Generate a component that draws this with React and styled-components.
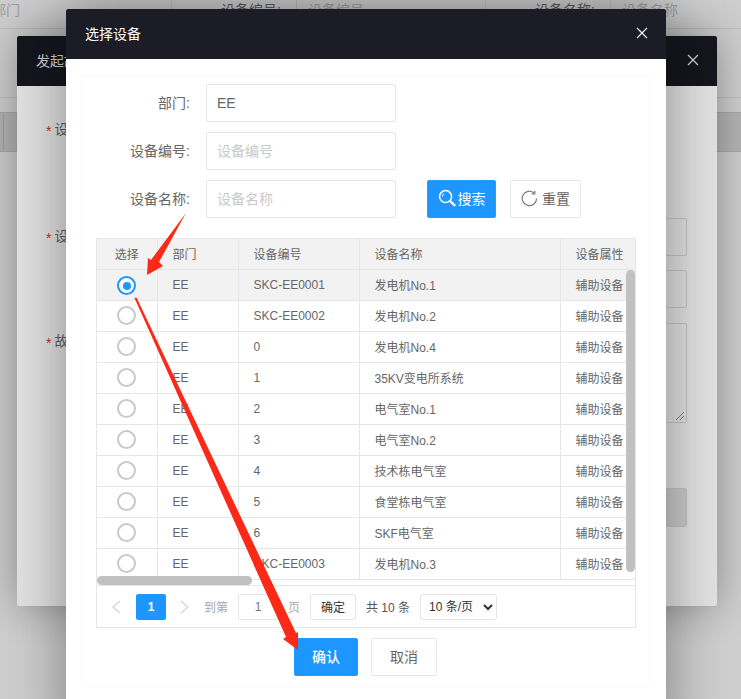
import styled, { createGlobalStyle } from 'styled-components';

const devices = [
	{ no: 'SKC-EE0001', name: '发电机No.1' },
	{ no: 'SKC-EE0002', name: '发电机No.2' },
	{ no: '0', name: '发电机No.4' },
	{ no: '1', name: '35KV变电所系统' },
	{ no: '2', name: '电气室No.1' },
	{ no: '3', name: '电气室No.2' },
	{ no: '4', name: '技术栋电气室' },
	{ no: '5', name: '食堂栋电气室' },
	{ no: '6', name: 'SKF电气室' },
	{ no: 'SKC-EE0003', name: '发电机No.3' },
];

function CloseIcon() {
	return (
		<svg width="14" height="14" viewBox="0 0 14 14" fill="none" stroke="currentColor" strokeWidth="1.3">
			<path d="M2 2l10 10M12 2L2 12" />
		</svg>
	);
}

function SearchIcon() {
	return (
		<svg width="18" height="18" viewBox="0 0 18 18" fill="none" stroke="#fff">
			<circle cx="7.6" cy="7.6" r="6" strokeWidth="1.5" />
			<path d="M4.4 7.6a3.2 3.2 0 0 1 1.6-2.8" strokeWidth="1" />
			<path d="M12 12l4.4 4.2" strokeWidth="2.4" strokeLinecap="round" />
		</svg>
	);
}

function ResetIcon() {
	return (
		<svg width="17" height="17" viewBox="0 0 17 17" fill="none" stroke="#777" strokeWidth="1.2">
			<path d="M15.6 8.5a7.2 7.2 0 1 1-2.3-5.3" />
			<path d="M13.8 0.8v3.2h-3.2" />
		</svg>
	);
}

function Chevron({ right }) {
	return (
		<svg width="9" height="14" viewBox="0 0 9 14" fill="none" stroke="#d5d5d5" strokeWidth="1.4">
			<path d={right ? 'M1 1l7 6-7 6' : 'M8 1L1 7l7 6'} />
		</svg>
	);
}

export default function App() {
	return (
		<Screen>
			<GlobalStyle />
			<SearchBar>
				<BarCell $w={172} $indent={-8}>部门</BarCell>
				<BarLabel $w={125}>设备编号:</BarLabel>
				<BarCell $w={189} $indent={11}>设备编号</BarCell>
				<BarLabel $w={125}>设备名称:</BarLabel>
				<BarCell $w={130} $indent={11}>设备名称</BarCell>
			</SearchBar>
			<BackTabs>
				<BackBand />
			</BackTabs>

			<BackModal>
				<ModalHeader $dim>
					<ModalTitle>发起故障报修</ModalTitle>
					<CloseButton $dim><CloseIcon /></CloseButton>
				</ModalHeader>
				<BackBody>
					<BackRow $top={25}>
						<BackLabel>设备编号</BackLabel>
					</BackRow>
					<BackRow $top={79}>
						<BackLabel>设备名称</BackLabel>
						<BackField $h={38} />
					</BackRow>
					<BackRow $top={14}>
						<BackLabel $hidden />
						<BackField $h={38} />
					</BackRow>
					<BackRow $top={15}>
						<BackLabel>故障描述</BackLabel>
						<BackField $h={100}>
							<Grip viewBox="0 0 8 8" width="8" height="8" stroke="#666" strokeWidth="0.8">
								<path d="M0 8l8-8M4 8l4-4" />
							</Grip>
						</BackField>
					</BackRow>
					<BackRow $top={65}>
						<BackLabel $hidden />
						<BackField $h={39} $filled />
					</BackRow>
				</BackBody>
			</BackModal>

			<Modal>
				<ModalHeader>
					<ModalTitle>选择设备</ModalTitle>
					<CloseButton><CloseIcon /></CloseButton>
				</ModalHeader>
				<ModalBody>
					<Panel>
						<FormRow>
							<FormLabel>部门:</FormLabel>
							<TextInput defaultValue="EE" />
						</FormRow>
						<FormRow>
							<FormLabel>设备编号:</FormLabel>
							<TextInput placeholder="设备编号" />
						</FormRow>
						<FormRow>
							<FormLabel>设备名称:</FormLabel>
							<TextInput placeholder="设备名称" />
							<Button $primary $w={69} $ml={31}><SearchIcon />搜索</Button>
							<Button $w={71} $ml={14} $gap={4}><ResetIcon />重置</Button>
						</FormRow>

						<TableBox>
							<TableScroll>
								<Table>
									<colgroup>
										<col width="60" />
										<col width="81" />
										<col width="121" />
										<col width="201" />
										<col width="120" />
									</colgroup>
									<thead>
										<tr>
											<HeadCell $center>选择</HeadCell>
											<HeadCell>部门</HeadCell>
											<HeadCell>设备编号</HeadCell>
											<HeadCell>设备名称</HeadCell>
											<HeadCell>设备属性</HeadCell>
										</tr>
									</thead>
									<tbody>
										{devices.map((d, i) => (
											<BodyRow key={d.no + d.name} $active={i === 0}>
												<BodyCell $center><Radio $checked={i === 0} /></BodyCell>
												<BodyCell>EE</BodyCell>
												<BodyCell>{d.no}</BodyCell>
												<BodyCell>{d.name}</BodyCell>
												<BodyCell>辅助设备</BodyCell>
											</BodyRow>
										))}
									</tbody>
								</Table>
								<VScroll />
								<HScroll />
							</TableScroll>
							<Pager>
								<PagerArrow><Chevron /></PagerArrow>
								<PageNumber>1</PageNumber>
								<PagerArrow $ml={14}><Chevron right /></PagerArrow>
								<PagerText $ml={15}>到第</PagerText>
								<PageInput defaultValue="1" />
								<PagerText $ml={10}>页</PagerText>
								<GoButton>确定</GoButton>
								<TotalText>共 10 条</TotalText>
								<SizeSelect defaultValue="10">
									<option value="10">10 条/页</option>
									<option value="20">20 条/页</option>
								</SizeSelect>
							</Pager>
						</TableBox>

						<Footer>
							<Button $primary $w={64} $bold>确认</Button>
							<Button $w={66}>取消</Button>
						</Footer>
					</Panel>
				</ModalBody>
			</Modal>

			<Arrows width="741" height="699" viewBox="0 0 741 699">
				<polygon points="186,213 159,262 163,266 147,275 148,258 151,260" />
				<polygon points="134.5,298 136.5,297.5 296,633 298,632 298,650 283,639 286,637" />
			</Arrows>
		</Screen>
	);
}

const GlobalStyle = createGlobalStyle`
	html, body {
		margin: 0;
		padding: 0;
		background: #cecece;
	}
	* {
		box-sizing: border-box;
	}
`;

const fontStack = `"Liberation Sans", "Noto Sans CJK SC", sans-serif`;

const Screen = styled.div`
	position: relative;
	width: 741px;
	height: 699px;
	overflow: hidden;
	background: #cecece;
	font-family: ${fontStack};
	color: #666;
`;

const SearchBar = styled.div`
	display: flex;
	height: 29px;
	border-bottom: 1px solid #bcbcbc;
	font-size: 14px;
	line-height: 20px;
`;

const BarCell = styled.div`
	width: ${(p) => p.$w}px;
	text-indent: ${(p) => p.$indent}px;
	color: #a0a0a0;
	border-right: 1px solid #bcbcbc;
	&:last-child {
		border-right: none;
	}
`;

const BarLabel = styled.div`
	width: ${(p) => p.$w}px;
	text-align: right;
	padding-right: 15px;
	color: #5c5c5c;
	border-right: 1px solid #bcbcbc;
`;

const BackTabs = styled.div`
	height: 55px;
	margin-top: 68px;
	padding-top: 14px;
	border-top: 1px solid #bcbcbc;
`;

const BackBand = styled.div`
	position: relative;
	height: 40px;
	background: #b4b4b4;
	border-top: 1px solid #a8a8a8;
	border-bottom: 1px solid #a8a8a8;
	&::before {
		content: '';
		position: absolute;
		left: 3px;
		top: 0;
		bottom: 0;
		width: 1px;
		background: #a0a0a0;
	}
`;

const BackModal = styled.section`
	position: absolute;
	left: 17px;
	top: 36px;
	width: 700px;
	height: 570px;
	background: #e2e2e2;
	border-radius: 2px;
	box-shadow: 0 0 42px rgba(0, 0, 0, 0.32);
`;

const Modal = styled.section`
	position: absolute;
	left: 66px;
	top: 9px;
	width: 600px;
	background: #fff;
	border-radius: 2px;
	box-shadow: 0 0 60px rgba(0, 0, 0, 0.4);
`;

const ModalHeader = styled.header`
	display: flex;
	align-items: center;
	justify-content: space-between;
	height: 50px;
	padding: 0 17px 0 19px;
	background: ${(p) => (p.$dim ? '#15151e' : '#1b1c26')};
	color: ${(p) => (p.$dim ? '#cfcfcf' : '#fff')};
	font-size: 14px;
	border-radius: 2px 2px 0 0;
`;

const ModalTitle = styled.span`
	margin-top: -2px;
`;

const CloseButton = styled.span`
	display: flex;
	color: ${(p) => (p.$dim ? '#cfcfcf' : '#f0f0f0')};
	margin-top: -3px;
`;

const BackBody = styled.div`
	padding-right: 30px;
	font-size: 14px;
	color: #5f5f5f;
`;

const BackRow = styled.div`
	display: flex;
	justify-content: space-between;
	margin-top: ${(p) => p.$top}px;
	line-height: 20px;
`;

const BackLabel = styled.div`
	padding: 8px 0 0 29px;
	visibility: ${(p) => (p.$hidden ? 'hidden' : 'visible')};
	&::before {
		content: '*';
		position: relative;
		top: 2px;
		color: #d42a0c;
		margin-right: 3px;
	}
`;

const BackField = styled.div`
	position: relative;
	width: 300px;
	height: ${(p) => p.$h}px;
	border: 1px solid #c4c4c4;
	border-radius: 2px;
	background: ${(p) => (p.$filled ? '#cbcbcb' : 'transparent')};
`;

const Grip = styled.svg`
	position: absolute;
	right: 2px;
	bottom: 2px;
`;

const ModalBody = styled.div`
	padding: 16px 15px 60px;
`;

const Panel = styled.div`
	padding: 8px 0 9px;
	border: 1px solid #fafafa;
	border-radius: 2px;
`;

const FormRow = styled.div`
	display: flex;
	align-items: center;
	height: 38px;
	margin-bottom: 10px;
`;

const FormLabel = styled.label`
	width: 108px;
	margin: -2px 16px 0 0;
	text-align: right;
	font-size: 14px;
	color: #666;
`;

const TextInput = styled.input`
	width: 190px;
	height: 38px;
	padding: 0 10px;
	border: 1px solid #e6e6e6;
	border-radius: 2px;
	outline: none;
	font-family: ${fontStack};
	font-size: 14px;
	color: #666;
	&::placeholder {
		color: #c9c9c9;
	}
`;

const Button = styled.button`
	display: flex;
	align-items: center;
	justify-content: center;
	gap: ${(p) => p.$gap || 2}px;
	width: ${(p) => p.$w}px;
	height: 38px;
	margin-left: ${(p) => p.$ml || 0}px;
	padding: 0 0 2px;
	border: 1px solid ${(p) => (p.$primary ? '#1e9fff' : '#e6e6e6')};
	border-radius: 2px;
	background: ${(p) => (p.$primary ? '#1e96ff' : '#fff')};
	color: ${(p) => (p.$primary ? '#fff' : '#666')};
	font-family: ${fontStack};
	font-size: 14px;
	font-weight: ${(p) => (p.$bold ? 500 : 400)};
`;

const TableBox = styled.div`
	width: 540px;
	height: 390px;
	margin: 20px 0 0 14px;
	display: flex;
	flex-direction: column;
	border: 1px solid #e6e6e6;
`;

const TableScroll = styled.div`
	position: relative;
	height: 347px;
	overflow: hidden;
	border-bottom: 1px solid #e6e6e6;
`;

const Table = styled.table`
	width: 583px;
	table-layout: fixed;
	border-collapse: collapse;
	font-size: 12px;
`;

const HeadCell = styled.th`
	height: 30px;
	padding: 0 ${(p) => (p.$center ? 0 : 15)}px;
	background: #f2f2f2;
	border-right: 1px solid #e6e6e6;
	border-bottom: 1px solid #e6e6e6;
	font-weight: 400;
	text-align: ${(p) => (p.$center ? 'center' : 'left')};
	color: #666;
`;

const BodyRow = styled.tr`
	background: ${(p) => (p.$active ? '#f2f2f2' : '#fff')};
`;

const BodyCell = styled.td`
	height: 31px;
	padding: 0 ${(p) => (p.$center ? 0 : 15)}px;
	border-right: 1px solid #e6e6e6;
	border-bottom: 1px solid #e6e6e6;
	text-align: ${(p) => (p.$center ? 'center' : 'left')};
	color: #666;
	white-space: nowrap;
`;

const Radio = styled.span`
	display: inline-flex;
	align-items: center;
	justify-content: center;
	width: 19px;
	height: 19px;
	vertical-align: -5px;
	border-radius: 50%;
	border: 2px solid ${(p) => (p.$checked ? '#1e96ff' : '#c9c9c9')};
	background: #fff;
	&::after {
		content: '';
		display: ${(p) => (p.$checked ? 'block' : 'none')};
		width: 8px;
		height: 8px;
		border-radius: 50%;
		background: #1e96ff;
	}
`;

const VScroll = styled.div`
	position: absolute;
	right: 0;
	top: 31px;
	width: 9px;
	height: 302px;
	border-radius: 5px;
	background: #c1c1c1;
`;

const HScroll = styled.div`
	position: absolute;
	left: 0;
	bottom: 0;
	width: 155px;
	height: 9px;
	border-radius: 5px;
	background: #c1c1c1;
`;

const Pager = styled.div`
	display: flex;
	align-items: center;
	flex: 1;
	padding: 0 0 0 15px;
	font-size: 12px;
`;

const PagerArrow = styled.span`
	display: flex;
	margin-left: ${(p) => p.$ml || 0}px;
`;

const PageNumber = styled.span`
	width: 30px;
	height: 26px;
	margin-left: 15px;
	border-radius: 2px;
	background: #1e96ff;
	color: #fff;
	font-weight: 700;
	font-size: 12px;
	line-height: 26px;
	text-align: center;
`;

const PagerText = styled.span`
	margin-left: ${(p) => p.$ml}px;
	color: #a8a8a8;
`;

const PageInput = styled.input`
	width: 40px;
	height: 26px;
	margin-left: 10px;
	padding: 0;
	border: 1px solid #e6e6e6;
	border-radius: 2px;
	outline: none;
	text-align: center;
	font-family: ${fontStack};
	font-size: 12px;
	color: #777;
`;

const GoButton = styled.button`
	width: 46px;
	height: 26px;
	margin-left: 10px;
	padding: 0;
	border: 1px solid #e6e6e6;
	border-radius: 2px;
	background: #fff;
	font-family: ${fontStack};
	font-size: 12px;
	color: #333;
`;

const TotalText = styled.span`
	margin-left: 10px;
	color: #555;
`;

const SizeSelect = styled.select`
	width: 77px;
	height: 26px;
	margin-left: 10px;
	padding: 0 0 0 4px;
	border: 1px solid #e6e6e6;
	border-radius: 2px;
	outline: none;
	background: #fff;
	font-family: ${fontStack};
	font-size: 12px;
	color: #333;
`;

const Footer = styled.div`
	display: flex;
	justify-content: center;
	gap: 13px;
	margin: 10px 0 0 -1px;
`;

const Arrows = styled.svg`
	position: absolute;
	left: 0;
	top: 0;
	pointer-events: none;
	fill: #fb2a18;
`;
